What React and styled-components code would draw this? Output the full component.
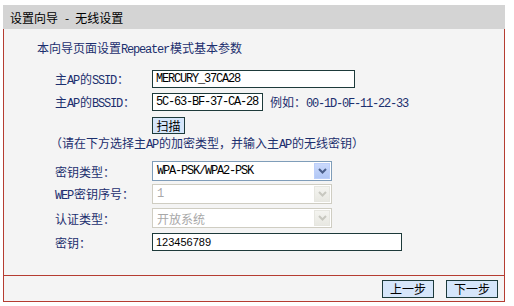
import React from "react";
import styled, { createGlobalStyle } from "styled-components";

const GlobalStyle = createGlobalStyle`
  html, body {
    margin: 0;
    padding: 0;
    background: #ffffff;
  }
  body {
    font-family: "Noto Sans CJK SC", sans-serif;
    font-size: 12px;
  }
`;

const RED = "#b53c31";
const NAVY = "#1c2f6e";

const Panel = styled.div`
  margin: 5px 0 0 3px;
  width: 502px;
`;

const TitleBar = styled.div`
  height: 24px;
  background: #d4d4d4;
  display: flex;
  align-items: center;
  padding-left: 7px;
  color: #000;
  font-size: 12px;
  white-space: nowrap;
`;

const Dash = styled.span`
  margin: 0 6px 0 7px;
`;

const Body = styled.div`
  box-sizing: border-box;
  height: 247px;
  background: #f4f4f4;
  border-left: 1px solid ${RED};
  border-right: 1px solid ${RED};
  border-bottom: 1px solid ${RED};
  padding: 11px 0 0 33px;
  color: ${NAVY};
`;

const Intro = styled.div`
  height: 16px;
  line-height: 16px;
`;

const Lat = styled.span`
  font-family: "Liberation Mono", monospace;
  font-size: 12px;
  letter-spacing: -1.2px;
  margin-right: 1px;
`;

const Form = styled.div`
  display: flex;
  flex-direction: column;
  margin-left: 18px;
`;

const Row = styled.div`
  display: grid;
  grid-template-columns: 97px auto;
  align-items: center;
  height: ${(p) => p.$h}px;
  margin-top: ${(p) => p.$top}px;
`;

const Label = styled.div`
  white-space: nowrap;
`;

const Field = styled.div`
  display: flex;
  align-items: center;
  gap: 8px;
`;

const Note = styled.div`
  height: 16px;
  line-height: 16px;
  margin-top: 1px;
  margin-left: -5px;
  white-space: nowrap;
`;

const TextInput = styled.div`
  box-sizing: border-box;
  width: ${(p) => p.$w}px;
  height: 18px;
  background: #fff;
  border: 1px solid #1d3a3a;
  display: flex;
  align-items: center;
  padding-left: 3px;
  color: #000;
  font-family: ${(p) => (p.$sans ? '"Liberation Sans", sans-serif' : '"Liberation Mono", monospace')};
  font-size: ${(p) => (p.$sans ? "11px" : "12px")};
  letter-spacing: ${(p) => (p.$sans ? "0" : "-1.2px")};
  white-space: nowrap;
  overflow: hidden;
`;

const Example = styled.span`
  white-space: nowrap;
  margin-left: -1px;
`;

const Button = styled.div`
  box-sizing: border-box;
  width: ${(p) => p.$w}px;
  height: ${(p) => p.$h}px;
  background: #d6e6fa;
  border: 1px solid #1d3a3a;
  color: #000;
  display: flex;
  align-items: center;
  justify-content: center;
  font-size: 12px;
`;

const SelectBox = styled.div`
  box-sizing: border-box;
  width: 180px;
  height: 20px;
  background: #fff;
  border: 1px solid ${(p) => (p.$disabled ? "#cfcdc2" : "#7f9db9")};
  display: flex;
  align-items: center;
  justify-content: space-between;
  padding: 1px;
`;

const SelectText = styled.span`
  padding-left: 3px;
  color: ${(p) => (p.$disabled ? "#a8a8a8" : "#000")};
  font-family: ${(p) => (p.$cjk ? '"Noto Sans CJK SC", sans-serif' : '"Liberation Mono", monospace')};
  font-size: 12px;
  letter-spacing: ${(p) => (p.$cjk ? "0" : "-1.2px")};
  white-space: nowrap;
`;

const ArrowBox = styled.div`
  box-sizing: border-box;
  width: 16px;
  height: 16px;
  border: 1px solid ${(p) => (p.$disabled ? "#e6e6e0" : "#bccffa")};
  background: ${(p) =>
    p.$disabled ? "linear-gradient(#f4f4f0, #e8e8e2)" : "linear-gradient(#cad9fc, #b1c7f5)"};
  display: flex;
  align-items: center;
  justify-content: center;
`;

const Footer = styled.div`
  box-sizing: border-box;
  height: 26px;
  background: #f4f4f4;
  border-left: 1px solid ${RED};
  border-right: 1px solid ${RED};
  border-bottom: 1px solid ${RED};
  display: flex;
  justify-content: flex-end;
  align-items: center;
  gap: 12px;
  padding-right: 6px;
`;

function Select({ value, disabled, cjk }) {
  return (
    <SelectBox $disabled={disabled}>
      <SelectText $disabled={disabled} $cjk={cjk}>{value}</SelectText>
      <ArrowBox $disabled={disabled}>
        <svg width="9" height="6" viewBox="0 0 9 6">
          <path
            d="M1 1 L4.5 4.5 L8 1"
            fill="none"
            stroke={disabled ? "#c8c8c0" : "#4a5f8a"}
            strokeWidth="2"
          />
        </svg>
      </ArrowBox>
    </SelectBox>
  );
}

export default function App() {
  return (
    <>
      <GlobalStyle />
      <Panel>
        <TitleBar>
          设置向导<Dash>-</Dash>无线设置
        </TitleBar>
        <Body>
          <Intro>
            本向导页面设置<Lat>Repeater</Lat>模式基本参数
          </Intro>
          <Form>
            <Row $h={18} $top={14}>
              <Label>主<Lat>AP</Lat>的<Lat>SSID</Lat>：</Label>
              <Field>
                <TextInput $w={203}>MERCURY_37CA28</TextInput>
              </Field>
            </Row>
            <Row $h={18} $top={5}>
              <Label>主<Lat>AP</Lat>的<Lat>BSSID</Lat>：</Label>
              <Field>
                <TextInput $w={111}>5C-63-BF-37-CA-28</TextInput>
                <Example>例如：<Lat>00-1D-0F-11-22-33</Lat></Example>
              </Field>
            </Row>
            <Row $h={17} $top={6}>
              <Label />
              <Field>
                <Button $w={33} $h={17}>扫描</Button>
              </Field>
            </Row>
            <Note>
              （请在下方选择主<Lat>AP</Lat>的加密类型，并输入主<Lat>AP</Lat>的无线密钥）
            </Note>
            <Row $h={20} $top={10}>
              <Label>密钥类型：</Label>
              <Field>
                <Select value="WPA-PSK/WPA2-PSK" />
              </Field>
            </Row>
            <Row $h={20} $top={3}>
              <Label><Lat>WEP</Lat>密钥序号：</Label>
              <Field>
                <Select value="1" disabled />
              </Field>
            </Row>
            <Row $h={20} $top={4}>
              <Label>认证类型：</Label>
              <Field>
                <Select value="开放系统" disabled cjk />
              </Field>
            </Row>
            <Row $h={18} $top={5}>
              <Label>密钥：</Label>
              <Field>
                <TextInput $w={250} $sans>123456789</TextInput>
              </Field>
            </Row>
          </Form>
        </Body>
        <Footer>
          <Button $w={52} $h={18}>上一步</Button>
          <Button $w={52} $h={18}>下一步</Button>
        </Footer>
      </Panel>
    </>
  );
}
